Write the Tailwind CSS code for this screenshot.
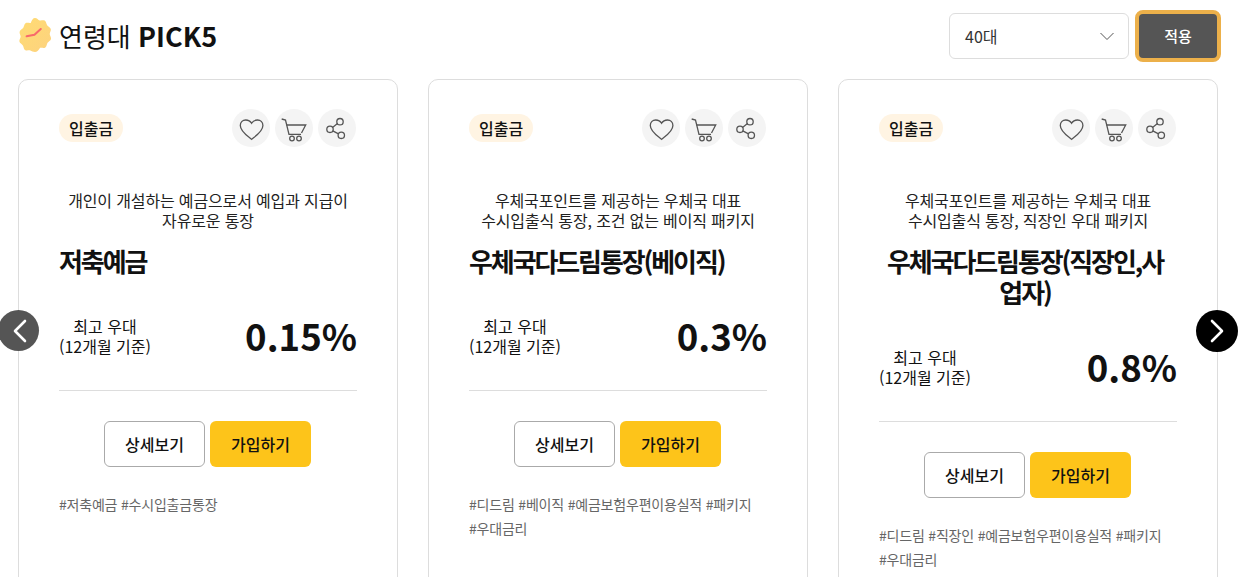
<!DOCTYPE html>
<html lang="ko">
<head>
    <meta charset="UTF-8">
    <meta name="viewport" content="width=device-width, initial-scale=1.0">
    <title>연령대 PICK5</title>
    <script src="https://cdn.jsdelivr.net/npm/@tailwindcss/browser@4"></script>
</head>
<body class="bg-white h-[577px] overflow-hidden relative font-['Noto_Sans_CJK_KR','Noto_Sans',sans-serif] text-[#111]">
    <!-- header -->
    <header class="h-[79px] pl-[18px] pr-[21px] flex items-center justify-between">
        <div class="flex items-center gap-[7px] -mt-[7px]">
            <svg class="-mt-[2px]" width="34" height="34" viewBox="1.500 1 31 32.500">
                <defs>
                    <linearGradient id="badge" x1="0" y1="0" x2="1" y2="1">
                        <stop offset="0" stop-color="#ffdc73"/>
                        <stop offset="1" stop-color="#fdd27f"/>
                    </linearGradient>
                </defs>
                <path d="M17 1c2 0 3 2 4.500 2.300 1.800.3 3.600-.7 5 .3 1.400 1 1.200 3 2.100 4.300 1 1.400 3 2 3.500 3.700.4 1.700-1 3-1 4.700 0 1.700 1.600 3 1.200 4.700-.4 1.700-2.400 2.300-3.300 3.700-.9 1.400-.7 3.500-2.100 4.500-1.400 1-3.300 0-5 .3C20 32.300 19 33.500 17 33.500s-3-1.200-4.500-1.500c-1.700-.3-3.600.7-5-.3-1.400-1-1.200-3.100-2.100-4.500-.9-1.400-2.900-2-3.300-3.700-.4-1.700 1.200-3 1.200-4.700 0-1.700-1.400-3-1-4.700.5-1.700 2.500-2.300 3.500-3.700.9-1.300.7-3.300 2.100-4.300 1.400-1 3.200 0 5-.3C14 3 15 1 17 1z" fill="url(#badge)"/>
                <path d="M9 18.500l7.500-1.500 6-5.500" stroke="#f8696b" stroke-width="2" stroke-linecap="round" stroke-linejoin="round" fill="none"/>
            </svg>
            <h1 class="text-[26px] leading-[36px]">연령대 <b class="text-[27px] font-bold">PICK5</b></h1>
        </div>
        <div class="flex items-center gap-[6px] -mt-[7px]">
            <div class="w-[180px] h-[46px] border border-[#ddd] rounded-[6px] pl-[15px] pr-[14px] flex items-center justify-between text-[16px] text-[#333]">
                <span>40대</span>
                <svg width="14" height="9" viewBox="0 0 14 9" fill="none" stroke="#555" stroke-width="1"><path d="M.5 1L7 7.500 13.500 1"/></svg>
            </div>
            <button class="w-[86px] h-[52px] rounded-[8px] border-[4px] border-[#ecb04a] bg-[#555] text-white text-[15px] font-medium">적용</button>
        </div>
    </header>

    <!-- cards -->
    <main class="flex gap-[30px] pl-[18px]">
        <article class="w-[380px] h-[560px] shrink-0 border border-[#ddd] rounded-[10px] px-[40px] pt-[29px]">
            <div class="flex items-center justify-between h-[38px]">
                <span class="h-[28px] px-[10px] rounded-full bg-[#fff4e3] text-[16px] font-medium leading-[28px]">입출금</span>
                <div class="flex gap-[5px] mr-px">
                    <span class="w-[38px] h-[38px] rounded-full bg-[#f4f4f4]">
                        <svg width="38" height="38" viewBox="0 0 38 38" fill="none" stroke="#555" stroke-width="1.300"><path d="M19.600 30.300C15.500 27 8.300 22.500 8.300 16.500 8.300 13 10.800 11 13.700 11 16 11 18.400 12.200 19.600 14.300 20.800 12.200 23.200 11 25.500 11c2.900 0 5.400 2 5.400 5.500 0 6-7.200 10.500-11.300 13.800z"/></svg>
                    </span>
                    <span class="w-[38px] h-[38px] rounded-full bg-[#f4f4f4]">
                        <svg width="38" height="38" viewBox="0 0 38 38" fill="none" stroke="#555" stroke-width="1.300"><path d="M6.700 10l3.800 1L14 25.300h12"/><path d="M11.500 16h19.200L26.500 24"/><circle cx="17" cy="29.500" r="2.300"/><circle cx="24" cy="29.500" r="2.300"/></svg>
                    </span>
                    <span class="w-[38px] h-[38px] rounded-full bg-[#f4f4f4]">
                        <svg width="38" height="38" viewBox="0 0 38 38" fill="none" stroke="#555" stroke-width="1.300"><circle cx="22" cy="12.700" r="3.200"/><circle cx="12" cy="20.300" r="3.200"/><circle cx="23.300" cy="26.300" r="3.200"/><path d="M19.500 14.600l-5 3.800M14.800 21.800l5.700 3"/></svg>
                    </span>
                </div>
            </div>
            <p class="mt-[43px] text-[16px] leading-[20px] tracking-[-0.15px] text-center text-[#222]">개인이 개설하는 예금으로서 예입과 지급이<br>자유로운 통장</p>
            <h2 class="mt-[15px] text-[26px] leading-[31px] font-bold tracking-[-2.1px]">저축예금</h2>
            <div class="mt-[35px] flex items-center justify-between h-[50px]">
                <p class="text-[16px] leading-[20px] text-center">최고 우대<br>(12개월 기준)</p>
                <p class="text-[36.6px] leading-[50px] font-bold">0.15%</p>
            </div>
            <div class="mt-[29px] border-t border-[#ddd]"></div>
            <div class="mt-[30px] pr-px flex justify-center gap-[5px]">
                <button class="w-[101px] h-[46px] rounded-[6px] border border-[#aaa] text-[16px] font-medium">상세보기</button>
                <button class="w-[101px] h-[46px] rounded-[6px] bg-[#fdc41a] text-[16px] font-medium">가입하기</button>
            </div>
            <p class="mt-[25px] text-[14px] leading-[24px] tracking-[-0.2px] text-[#666]">#저축예금 #수시입출금통장</p>
        </article>

        <article class="w-[380px] h-[560px] shrink-0 border border-[#ddd] rounded-[10px] px-[40px] pt-[29px]">
            <div class="flex items-center justify-between h-[38px]">
                <span class="h-[28px] px-[10px] rounded-full bg-[#fff4e3] text-[16px] font-medium leading-[28px]">입출금</span>
                <div class="flex gap-[5px] mr-px">
                    <span class="w-[38px] h-[38px] rounded-full bg-[#f4f4f4]">
                        <svg width="38" height="38" viewBox="0 0 38 38" fill="none" stroke="#555" stroke-width="1.300"><path d="M19.600 30.300C15.500 27 8.300 22.500 8.300 16.500 8.300 13 10.800 11 13.700 11 16 11 18.400 12.200 19.600 14.300 20.800 12.200 23.200 11 25.500 11c2.900 0 5.400 2 5.400 5.500 0 6-7.200 10.500-11.300 13.800z"/></svg>
                    </span>
                    <span class="w-[38px] h-[38px] rounded-full bg-[#f4f4f4]">
                        <svg width="38" height="38" viewBox="0 0 38 38" fill="none" stroke="#555" stroke-width="1.300"><path d="M6.700 10l3.800 1L14 25.300h12"/><path d="M11.500 16h19.200L26.500 24"/><circle cx="17" cy="29.500" r="2.300"/><circle cx="24" cy="29.500" r="2.300"/></svg>
                    </span>
                    <span class="w-[38px] h-[38px] rounded-full bg-[#f4f4f4]">
                        <svg width="38" height="38" viewBox="0 0 38 38" fill="none" stroke="#555" stroke-width="1.300"><circle cx="22" cy="12.700" r="3.200"/><circle cx="12" cy="20.300" r="3.200"/><circle cx="23.300" cy="26.300" r="3.200"/><path d="M19.500 14.600l-5 3.800M14.800 21.800l5.700 3"/></svg>
                    </span>
                </div>
            </div>
            <p class="mt-[43px] text-[16px] leading-[20px] tracking-[-0.15px] text-center text-[#222]">우체국포인트를 제공하는 우체국 대표<br>수시입출식 통장, 조건 없는 베이직 패키지</p>
            <h2 class="mt-[15px] text-[26px] leading-[31px] font-bold tracking-[-2.1px]">우체국다드림통장(베이직)</h2>
            <div class="mt-[35px] flex items-center justify-between h-[50px]">
                <p class="text-[16px] leading-[20px] text-center">최고 우대<br>(12개월 기준)</p>
                <p class="text-[36.6px] leading-[50px] font-bold">0.3%</p>
            </div>
            <div class="mt-[29px] border-t border-[#ddd]"></div>
            <div class="mt-[30px] pr-px flex justify-center gap-[5px]">
                <button class="w-[101px] h-[46px] rounded-[6px] border border-[#aaa] text-[16px] font-medium">상세보기</button>
                <button class="w-[101px] h-[46px] rounded-[6px] bg-[#fdc41a] text-[16px] font-medium">가입하기</button>
            </div>
            <p class="mt-[25px] text-[14px] leading-[24px] tracking-[-0.2px] text-[#666]">#디드림 #베이직 #예금보험우편이용실적 #패키지<br>#우대금리</p>
        </article>

        <article class="w-[380px] h-[560px] shrink-0 border border-[#ddd] rounded-[10px] px-[40px] pt-[29px]">
            <div class="flex items-center justify-between h-[38px]">
                <span class="h-[28px] px-[10px] rounded-full bg-[#fff4e3] text-[16px] font-medium leading-[28px]">입출금</span>
                <div class="flex gap-[5px] mr-px">
                    <span class="w-[38px] h-[38px] rounded-full bg-[#f4f4f4]">
                        <svg width="38" height="38" viewBox="0 0 38 38" fill="none" stroke="#555" stroke-width="1.300"><path d="M19.600 30.300C15.500 27 8.300 22.500 8.300 16.500 8.300 13 10.800 11 13.700 11 16 11 18.400 12.200 19.600 14.300 20.800 12.200 23.200 11 25.500 11c2.900 0 5.400 2 5.400 5.500 0 6-7.200 10.500-11.300 13.800z"/></svg>
                    </span>
                    <span class="w-[38px] h-[38px] rounded-full bg-[#f4f4f4]">
                        <svg width="38" height="38" viewBox="0 0 38 38" fill="none" stroke="#555" stroke-width="1.300"><path d="M6.700 10l3.800 1L14 25.300h12"/><path d="M11.500 16h19.200L26.500 24"/><circle cx="17" cy="29.500" r="2.300"/><circle cx="24" cy="29.500" r="2.300"/></svg>
                    </span>
                    <span class="w-[38px] h-[38px] rounded-full bg-[#f4f4f4]">
                        <svg width="38" height="38" viewBox="0 0 38 38" fill="none" stroke="#555" stroke-width="1.300"><circle cx="22" cy="12.700" r="3.200"/><circle cx="12" cy="20.300" r="3.200"/><circle cx="23.300" cy="26.300" r="3.200"/><path d="M19.500 14.600l-5 3.800M14.800 21.800l5.700 3"/></svg>
                    </span>
                </div>
            </div>
            <p class="mt-[43px] text-[16px] leading-[20px] tracking-[-0.15px] text-center text-[#222]">우체국포인트를 제공하는 우체국 대표<br>수시입출식 통장, 직장인 우대 패키지</p>
            <h2 class="mt-[15px] pr-[6px] text-[26px] leading-[31px] font-bold tracking-[-2.1px] text-center">우체국다드림통장(직장인,사<br>업자)</h2>
            <div class="mt-[35px] flex items-center justify-between h-[50px]">
                <p class="text-[16px] leading-[20px] text-center">최고 우대<br>(12개월 기준)</p>
                <p class="text-[36.6px] leading-[50px] font-bold">0.8%</p>
            </div>
            <div class="mt-[29px] border-t border-[#ddd]"></div>
            <div class="mt-[30px] pr-px flex justify-center gap-[5px]">
                <button class="w-[101px] h-[46px] rounded-[6px] border border-[#aaa] text-[16px] font-medium">상세보기</button>
                <button class="w-[101px] h-[46px] rounded-[6px] bg-[#fdc41a] text-[16px] font-medium">가입하기</button>
            </div>
            <p class="mt-[25px] text-[14px] leading-[24px] tracking-[-0.2px] text-[#666]">#디드림 #직장인 #예금보험우편이용실적 #패키지<br>#우대금리</p>
        </article>
    </main>

    <!-- carousel arrows -->
    <button class="absolute left-[-2px] top-[310px] w-[41px] h-[41px] rounded-full bg-[#555] flex items-center justify-center">
        <svg class="ml-[2px]" width="16" height="24" viewBox="0 0 16 24" fill="none" stroke="#fff" stroke-width="2.600" stroke-linecap="round" stroke-linejoin="round"><path d="M13 2l-10 10 10 10"/></svg>
    </button>
    <button class="absolute left-[1196px] top-[310px] w-[42px] h-[42px] rounded-full bg-black flex items-center justify-center">
        <svg width="16" height="24" viewBox="0 0 16 24" fill="none" stroke="#fff" stroke-width="2.600" stroke-linecap="round" stroke-linejoin="round"><path d="M3 2l10 10-10 10"/></svg>
    </button>
</body>
</html>
